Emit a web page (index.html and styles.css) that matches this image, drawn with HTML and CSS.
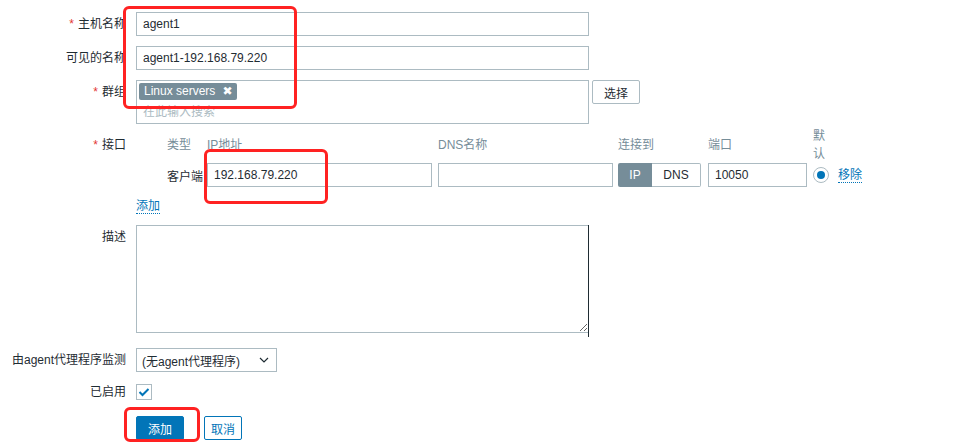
FILE: index.html
```html
<!DOCTYPE html>
<html lang="zh-CN">
<head>
<meta charset="utf-8">
<title>主机</title>
<link rel="stylesheet" href="styles.css">
</head>
<body>
<form class="form">
  <div class="lbl"><span class="req">*</span>主机名称</div>
  <div class="fld"><input class="txt w-full" type="text" value="agent1"></div>

  <div class="lbl">可见的名称</div>
  <div class="fld"><input class="txt w-full" type="text" value="agent1-192.168.79.220"></div>

  <div class="lbl"><span class="req">*</span>群组</div>
  <div class="fld ms-row">
    <div class="ms">
      <div class="tags"><span class="tag">Linux servers<span class="tag-x">&#10006;</span></span></div>
      <div class="ph">在此输入搜索</div>
    </div>
    <button type="button" class="btn-grey">选择</button>
  </div>

  <div class="lbl lbl-iface"><span class="req">*</span>接口</div>
  <div class="fld iface">
    <div class="iface-grid">
      <span></span>
      <span class="th">类型</span>
      <span class="th">IP地址</span>
      <span class="th">DNS名称</span>
      <span class="th">连接到</span>
      <span class="th">端口</span>
      <span class="th th-def">默认</span>
      <span></span>

      <span></span>
      <span class="td-type">客户端</span>
      <input class="txt w-ip" type="text" value="192.168.79.220">
      <input class="txt w-dns" type="text" value="">
      <div class="toggle"><span class="tg tg-on">IP</span><span class="tg tg-off">DNS</span></div>
      <input class="txt w-port" type="text" value="10050">
      <span class="radio"><span class="radio-dot"></span></span>
      <a class="link" href="#">移除</a>
    </div>
    <a class="link add" href="#">添加</a>
  </div>

  <div class="lbl">描述</div>
  <div class="fld"><div class="ta-wrap"><textarea class="ta"></textarea></div></div>

  <div class="lbl">由agent代理程序监测</div>
  <div class="fld">
    <div class="sel"><span>(无agent代理程序)</span>
      <svg width="10" height="6" viewBox="0 0 10 6"><path d="M1 1 L5 5 L9 1" fill="none" stroke="#1f2c33" stroke-width="1.2"/></svg>
    </div>
  </div>

  <div class="lbl lbl-chk">已启用</div>
  <div class="fld fld-chk">
    <span class="chk"><svg width="12" height="10" viewBox="0 0 12 10"><path d="M1.5 5 L4.5 8 L10.5 2" fill="none" stroke="#0275b8" stroke-width="2"/></svg></span>
  </div>

  <div class="lbl lbl-empty"></div>
  <div class="fld btns">
    <button type="button" class="btn-main">添加</button>
    <button type="button" class="btn-alt">取消</button>
  </div>
</form>

<div class="mark m1"></div>
<div class="mark m2"></div>
<div class="mark m3"></div>
</body>
</html>
```

FILE: styles.css
```css
body {
  margin: 0;
  font: 12px "Liberation Sans", "Noto Sans CJK SC", sans-serif;
  color: #1f2c33;
  background: #fff;
  position: relative;
  min-height: 443px;
}

.form {
  display: grid;
  grid-template-columns: 126px 1fr;
  column-gap: 10px;
  row-gap: 10px;
  padding-top: 12px;
  align-items: start;
}

.lbl {
  display: flex;
  justify-content: flex-end;
  align-items: center;
  white-space: nowrap;
  height: 24px;
  line-height: 18px;
}

.lbl-iface { height: 22px; }
.lbl-chk { height: 20px; }
.lbl-empty { height: 24px; }

.req {
  color: #e33734;
  margin-right: 4px;
}

.fld { min-width: 0; }

.txt {
  box-sizing: border-box;
  height: 24px;
  border: 1px solid #acbbc2;
  padding: 0 6px;
  margin: 0;
  font: inherit;
  color: inherit;
  background: #fff;
  outline: none;
  border-radius: 0;
}

.w-full { width: 453px; display: block; }

/* groups multiselect */
.ms-row {
  display: flex;
  align-items: flex-start;
  gap: 3px;
}

.ms {
  box-sizing: border-box;
  width: 453px;
  height: 44px;
  border: 1px solid #acbbc2;
  padding: 2px 2px 0;
}

.tags { height: 17px; display: flex; }

.tag {
  display: inline-flex;
  align-items: center;
  height: 17px;
  background: #768d99;
  color: #fff;
  padding: 0 5px 0 5px;
  border-radius: 2px;
  line-height: 17px;
  white-space: nowrap;
}

.tag-x {
  margin-left: 7px;
  font-size: 12px;
  font-weight: bold;
  font-family: "DejaVu Sans", sans-serif;
}

.ph {
  color: #acbbc2;
  padding: 4px 0 0 4px;
  line-height: 16px;
}

.btn-grey {
  box-sizing: border-box;
  width: 48px;
  height: 24px;
  background: #fff;
  border: 1px solid #acbbc2;
  border-radius: 2px;
  font: inherit;
  color: #1f2c33;
  padding: 0;
  margin: 0;
}

/* interface */
.iface { display: flex; flex-direction: column; align-items: flex-start; }

.iface-grid {
  display: grid;
  grid-template-columns: 31px 40px 231px 180px 90px 105px 25px auto;
  grid-template-rows: 36px 24px;
  align-items: center;
  margin-top: -7px;
}

.th {
  color: #768d99;
  line-height: 18px;
  white-space: nowrap;
}

.th-def {
  white-space: normal;
  width: 14px;
}

.td-type { white-space: nowrap; }

.w-ip { width: 225px; }
.w-dns { width: 175px; }
.w-port { width: 99px; }

.toggle {
  display: flex;
  height: 24px;
  width: 83px;
}

.tg {
  box-sizing: border-box;
  display: flex;
  align-items: center;
  justify-content: center;
  height: 24px;
}

.tg-on {
  width: 34px;
  background: #768d99;
  color: #fff;
  border-radius: 2px 0 0 2px;
}

.tg-off {
  width: 49px;
  background: #fff;
  border: 1px solid #acbbc2;
  border-left: none;
  border-radius: 0 2px 2px 0;
}

.radio {
  box-sizing: border-box;
  width: 16px;
  height: 16px;
  border: 1px solid #acbbc2;
  border-radius: 50%;
  display: flex;
  align-items: center;
  justify-content: center;
}

.radio-dot {
  width: 8px;
  height: 8px;
  border-radius: 50%;
  background: #0275b8;
}

.link {
  color: #0275b8;
  text-decoration: none;
  border-bottom: 1px dotted #0275b8;
  line-height: 14px;
  white-space: nowrap;
  justify-self: start;
}

.add {
  margin-top: 12px;
  margin-bottom: 1px;
}

/* description */
.ta-wrap {
  width: 452px;
  border-right: 1px solid #1f2c33;
  padding-bottom: 4px;
  margin-bottom: 1px;
}

.ta {
  display: block;
  box-sizing: border-box;
  width: 452px;
  height: 108px;
  border: 1px solid #acbbc2;
  border-right: none;
  margin: 0;
  padding: 4px 6px;
  font: inherit;
  outline: none;
}

/* proxy select */
.sel {
  box-sizing: border-box;
  width: 141px;
  height: 24px;
  border: 1px solid #acbbc2;
  display: flex;
  align-items: center;
  justify-content: space-between;
  padding: 0 7px 0 5px;
  white-space: nowrap;
}

/* checkbox */
.fld-chk { height: 20px; display: flex; align-items: center; }

.chk {
  box-sizing: border-box;
  width: 16px;
  height: 16px;
  border: 1px solid #acbbc2;
  display: flex;
  align-items: center;
  justify-content: center;
}

/* buttons */
.btns {
  display: flex;
  gap: 20px;
  margin-top: 4px;
}

.btns button {
  box-sizing: border-box;
  height: 24px;
  font: inherit;
  padding: 0;
  margin: 0;
  border-radius: 2px;
}

.btn-main {
  width: 48px;
  background: #0275b8;
  color: #fff;
  border: 1px solid #0275b8;
}

.btn-alt {
  width: 38px;
  background: #fff;
  color: #0275b8;
  border: 1px solid #0275b8;
}

/* red annotation boxes */
.mark {
  position: absolute;
  box-sizing: border-box;
  border: 3px solid #f22;
  border-radius: 6px;
}

.m1 { left: 123px; top: 6px; width: 174px; height: 103px; }
.m2 { left: 204px; top: 149px; width: 124px; height: 55px; }
.m3 { left: 124px; top: 407px; width: 76px; height: 35px; }
```
